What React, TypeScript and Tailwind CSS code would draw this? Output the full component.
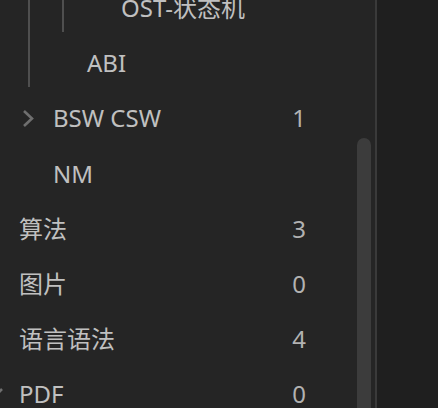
import React from "react";

type Row = {
  label: string;
  depth: number;
  count?: number;
  twistie?: "right" | "down";
  guides: number[];
};

const rows: Row[] = [
  { label: "OST-状态机", depth: 3, guides: [1, 2] },
  { label: "ABI", depth: 2, guides: [1] },
  { label: "BSW CSW", depth: 1, count: 1, twistie: "right", guides: [] },
  { label: "NM", depth: 1, guides: [] },
  { label: "算法", depth: 0, count: 3, guides: [] },
  { label: "图片", depth: 0, count: 0, guides: [] },
  { label: "语言语法", depth: 0, count: 4, guides: [] },
  { label: "PDF", depth: 0, count: 0, twistie: "down", guides: [] },
];

function Chevron({ dir }: { dir: "right" | "down" }) {
  if (dir === "right") {
    return (
      <svg width="12" height="19" viewBox="0 0 12 19" className="ml-[3px]">
        <polyline points="2,2 10,9.5 2,17" fill="none" stroke="#6f6f6f" strokeWidth="2.6" />
      </svg>
    );
  }
  return (
    <svg width="19" height="12" viewBox="0 0 19 12" className="-mt-[2px]">
      <polyline points="2,2 9.5,10 17,2" fill="none" stroke="#6f6f6f" strokeWidth="2.6" />
    </svg>
  );
}

function TreeRow({ row }: { row: Row }) {
  const slots = Array.from({ length: row.depth + 1 }, (_, i) => i);
  return (
    <div className="flex h-[55.2px] items-center pt-[7px]">
      {slots.map((i) => (
        <div key={i} className="relative flex h-full w-[34px] shrink-0 items-center">
          {row.guides.includes(i) && (
            <div className="absolute left-[9px] -top-[7px] h-[55.2px] w-[1.5px] bg-[#4f4f4f]" />
          )}
          {i === row.depth && row.twistie && <Chevron dir={row.twistie} />}
        </div>
      ))}
      <div className="flex-1 whitespace-nowrap text-[#c0c0c0]">{row.label}</div>
      <div className="w-[30px] text-center text-[#b2b2b2]">
        {row.count !== undefined ? row.count : ""}
      </div>
    </div>
  );
}

export default function App() {
  return (
    <div
      className="flex h-[408px] w-[438px] overflow-hidden bg-[#1f1f1f] text-[24px]"
      style={{ fontFamily: '"Noto Sans", "Noto Sans CJK SC", sans-serif' }}
    >
      <div className="relative h-full w-[375px] shrink-0 overflow-hidden bg-[#252525]">
        <div className="-ml-[15px] -mt-[23px] pr-[61px]">
          {rows.map((r) => (
            <TreeRow key={r.label} row={r} />
          ))}
        </div>
        <div className="absolute left-[357px] top-[138px] h-[300px] w-[14px] rounded-[7px] bg-[#3c3c3c]" />
      </div>
      <div className="h-full w-[1.5px] shrink-0 bg-[#3a3a3a]" />
      <div className="flex-1 bg-[#1f1f1f]" />
    </div>
  );
}
